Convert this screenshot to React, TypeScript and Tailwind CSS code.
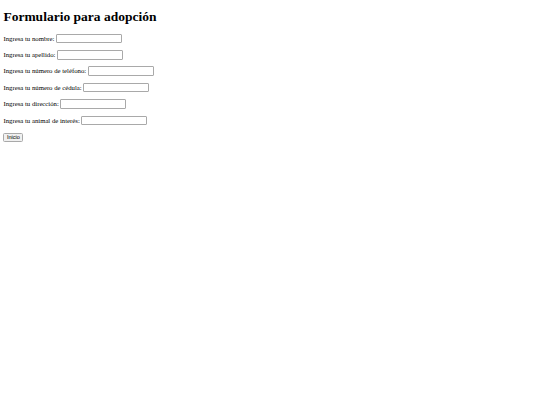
import React from 'react';

const fields = [
  'Ingresa tu nombre:',
  'Ingresa tu apellido:',
  'Ingresa tu número de teléfono:',
  'Ingresa tu número de cédula:',
  'Ingresa tu dirección:',
  'Ingresa tu animal de interés:',
];

const App: React.FC = () => {
  return (
    <div className="min-h-[405px] bg-white px-[3.4px] py-[0.1px] text-black font-['Liberation_Serif',serif]">
      <h1 className="my-[9px] text-[13.5px] font-bold leading-[1.15]">Formulario para adopción</h1>
      <form className="text-[6.75px] leading-[1.15]">
        {fields.map(label => (
          <p key={label} className="my-[6.75px] flex min-h-[9.65px] items-center">
            <span>{label}</span>
            <input
              type="text"
              className="ml-[1.5px] h-[9.5px] w-[66px] rounded-[1px] border border-[#a9a9a9] bg-white"
            />
          </p>
        ))}
        <p className="mt-[7.5px] flex min-h-[9.65px] items-center">
          <button
            type="button"
            className="h-[9px] rounded-[1.5px] border border-[#a9a9a9] bg-[#f0f0f0] px-[2.5px] text-[5.6px] leading-none font-['Liberation_Sans',sans-serif]"
          >
            Inicio
          </button>
        </p>
      </form>
    </div>
  );
};

export default App;
